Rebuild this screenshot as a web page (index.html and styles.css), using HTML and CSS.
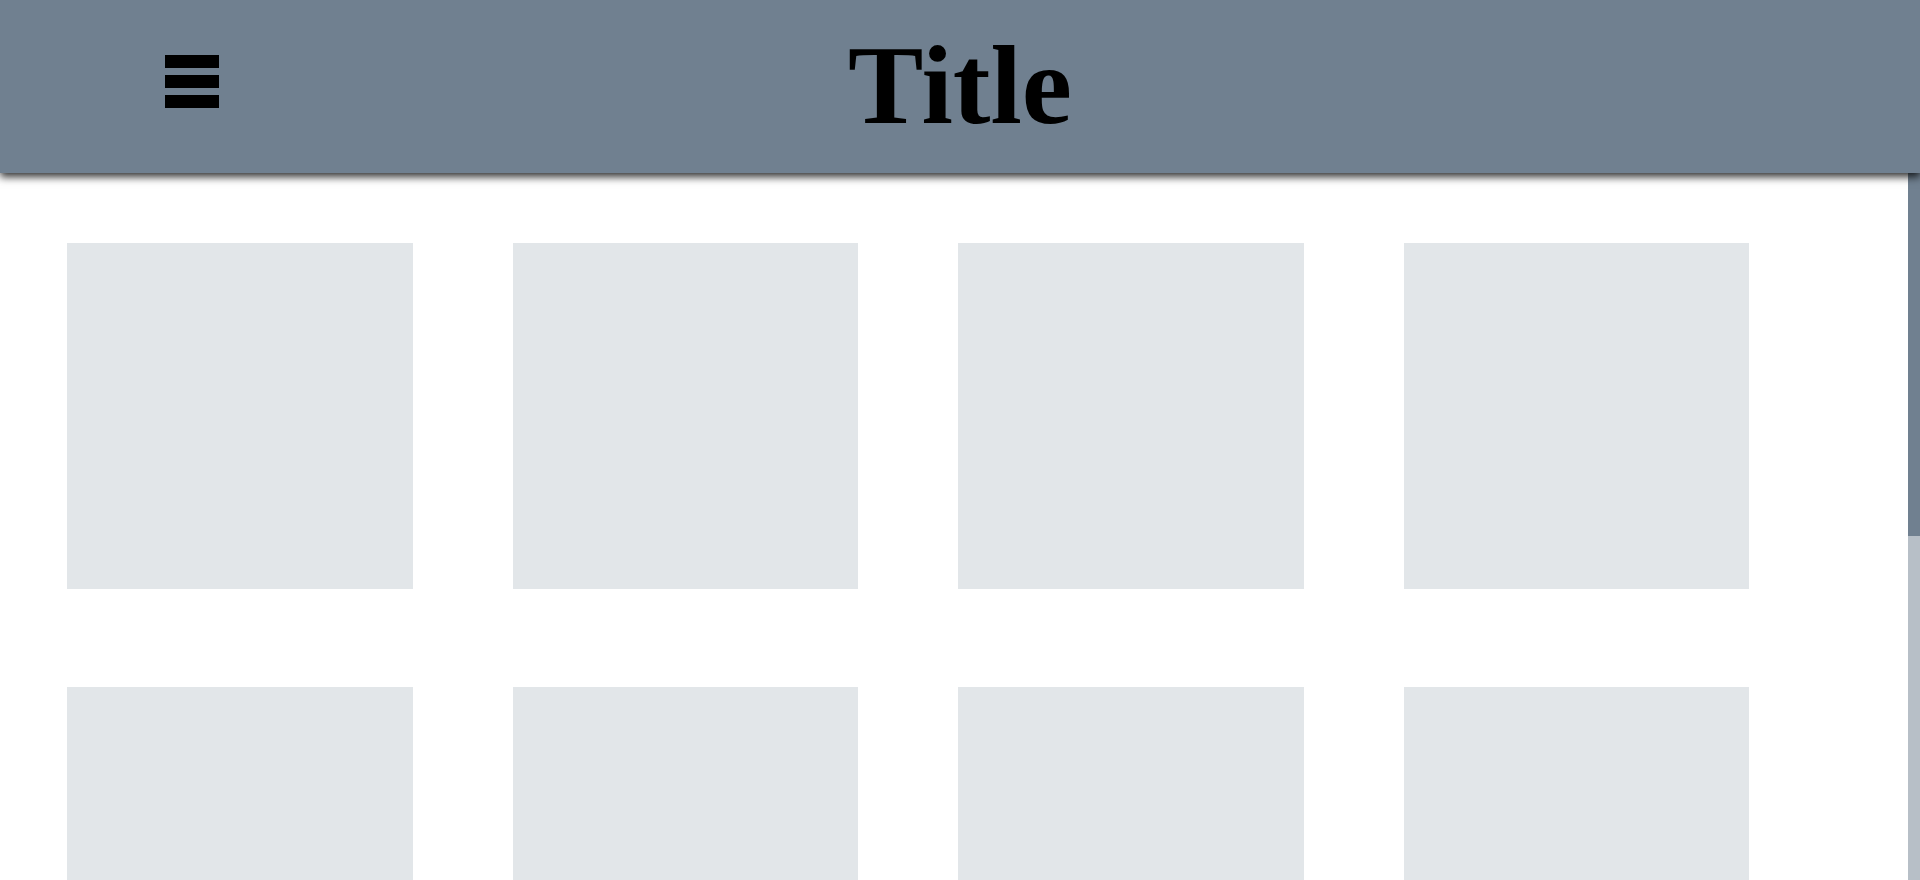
FILE: index.html
```html
<!DOCTYPE html>
<html lang="en">
<head>
  <meta charset="UTF-8">
  <meta name="viewport" content="width=device-width, initial-scale=1.0">
  <title>Title</title>
  <link rel="stylesheet" href="styles.css">
</head>
<body>
  <header class="top-bar">
    <button class="menu-btn" type="button" aria-label="Menu">
      <span></span>
      <span></span>
      <span></span>
    </button>
    <h1 class="page-title">Title</h1>
  </header>

  <main class="content">
    <div class="scroll-area">
      <div class="tile-grid">
        <div class="tile"></div>
        <div class="tile"></div>
        <div class="tile"></div>
        <div class="tile"></div>
        <div class="tile"></div>
        <div class="tile"></div>
        <div class="tile"></div>
        <div class="tile"></div>
        <div class="tile"></div>
        <div class="tile"></div>
        <div class="tile"></div>
        <div class="tile"></div>
      </div>
    </div>
    <div class="scrollbar">
      <div class="scrollbar-thumb"></div>
    </div>
  </main>
</body>
</html>
```

FILE: styles.css
```css
* {
  margin: 0;
  padding: 0;
  box-sizing: border-box;
}

body {
  font-family: "Liberation Serif", "Times New Roman", serif;
  background-color: white;
  display: flex;
  flex-direction: column;
  height: 100vh;
  overflow: hidden;
}

.top-bar {
  position: relative;
  z-index: 2;
  flex: 0 0 173px;
  display: flex;
  align-items: center;
  justify-content: center;
  background-color: slategray;
  box-shadow: 0 4px 8px rgba(0, 0, 0, 0.8);
}

.menu-btn {
  position: absolute;
  left: 165px;
  top: 55px;
  display: flex;
  flex-direction: column;
  gap: 7px;
  background: none;
  border: none;
  cursor: pointer;
}

.menu-btn span {
  display: block;
  width: 54px;
  height: 13px;
  background-color: black;
}

.page-title {
  font-size: 113px;
  font-weight: bold;
  line-height: 1;
  color: black;
  margin-bottom: 5px;
}

.content {
  flex: 1;
  display: flex;
  min-height: 0;
}

.scroll-area {
  flex: 1;
  overflow: hidden;
  padding: 70px 0 70px 67px;
}

.scrollbar {
  flex: 0 0 12px;
  background-color: rgba(112, 128, 144, 0.5);
}

.scrollbar-thumb {
  height: 363px;
  background-color: slategray;
}

.tile-grid {
  display: grid;
  grid-template-columns: repeat(4, 345.5px);
  grid-auto-rows: 346px;
  column-gap: 100px;
  row-gap: 98px;
}

.tile {
  background-color: rgba(112, 128, 144, 0.2);
}
```
